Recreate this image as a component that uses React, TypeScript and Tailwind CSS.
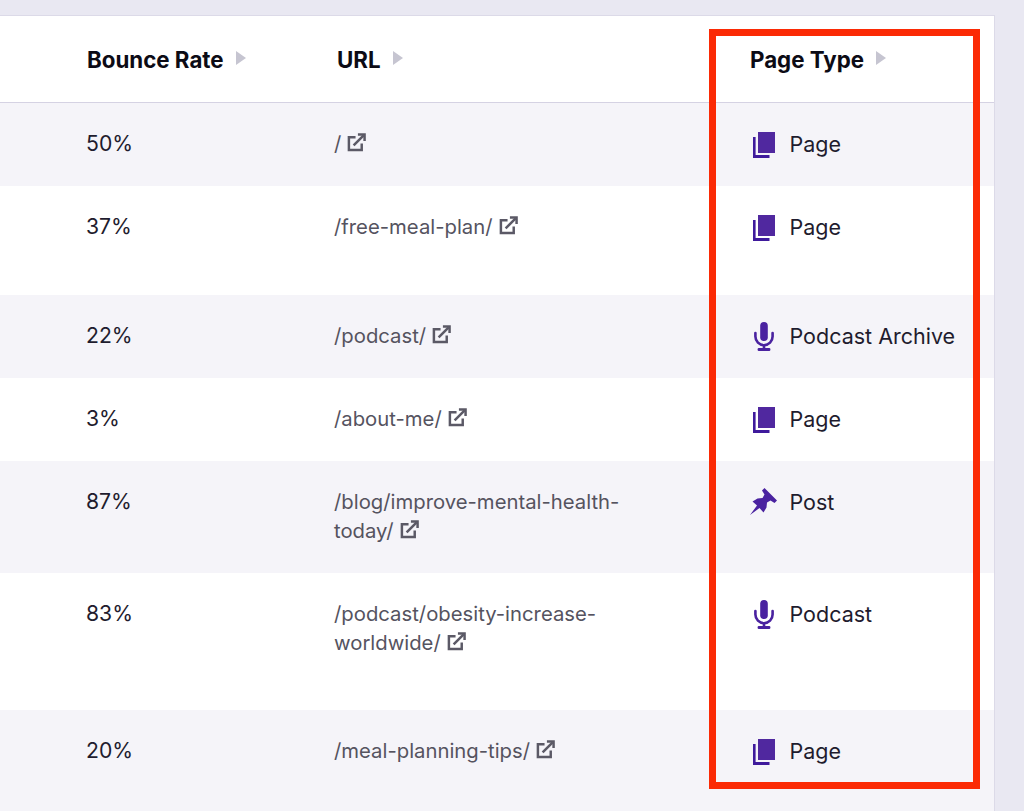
import React from 'react';

function SortArrow() {
  return (
    <svg width="10" height="14" viewBox="0 0 10 14" className="ml-[12px] mb-[2px] shrink-0">
      <polygon points="0,0 10,7 0,14" fill="#c6c5d1" />
    </svg>
  );
}

function ExternalIcon() {
  return (
    <svg width="19" height="19" viewBox="0 0 20 20" fill="none" stroke="#5b5966" strokeWidth="2.6" className="inline-block align-[-1px] ml-[6px]">
      <path d="M9 4.5H2v13.5h13.5V11" />
      <path d="M7 13 L17.5 2.5" />
      <path d="M11.5 1.5H18.5V8.5" />
    </svg>
  );
}

function PagesIcon() {
  return (
    <svg width="22" height="26" viewBox="0 0 22 26" className="mt-[3px] shrink-0">
      <path d="M0 5h2.6v18H16.5v3H0z" fill="#3f1a9c" />
      <rect x="5" y="0" width="17" height="21" fill="#50289f" />
    </svg>
  );
}

function MicIcon() {
  return (
    <svg width="20" height="29" viewBox="0 0 20 29" className="mt-[1px] shrink-0">
      <rect x="6.2" y="0" width="7.6" height="19" rx="3.8" fill="#4a22a0" />
      <path d="M1.4 11v3.6a8.6 8.6 0 0 0 17.2 0V11" fill="none" stroke="#4a22a0" strokeWidth="2.6" strokeLinecap="round" />
      <rect x="8.7" y="22" width="2.6" height="5" fill="#4a22a0" />
      <rect x="3.6" y="26" width="12.8" height="3" rx="1.2" fill="#4a22a0" />
    </svg>
  );
}

function PinIcon() {
  return (
    <svg width="27" height="27" viewBox="0 0 27 27" className="-ml-[2px] mt-[1px] shrink-0">
      <polygon
        points="0,27 7,17.5 2.5,13.5 7.5,10.5 12.5,10 14.5,6.5 12,2.5 14.5,0 27,12.5 24.5,15 20.5,12.5 17,14.5 16.5,19.5 13.5,24.5 9.5,20"
        fill="#4a22a0"
      />
    </svg>
  );
}

const rows = [
  { h: 'h-[83px]', tint: true, rate: '50%', url: '/', type: 'Page', icon: <PagesIcon /> },
  { h: 'h-[109px]', tint: false, rate: '37%', url: '/free-meal-plan/', type: 'Page', icon: <PagesIcon /> },
  { h: 'h-[83px]', tint: true, rate: '22%', url: '/podcast/', type: 'Podcast Archive', icon: <MicIcon /> },
  { h: 'h-[83px]', tint: false, rate: '3%', url: '/about-me/', type: 'Page', icon: <PagesIcon /> },
  { h: 'h-[112px]', tint: true, rate: '87%', url: '/blog/improve-mental-health-today/', type: 'Post', icon: <PinIcon /> },
  { h: 'h-[137px]', tint: false, rate: '83%', url: '/podcast/obesity-increase-worldwide/', type: 'Podcast', icon: <MicIcon /> },
  { h: 'h-[101px]', tint: true, rate: '20%', url: '/meal-planning-tips/', type: 'Page', icon: <PagesIcon /> },
];

export default function App() {
  return (
    <div className="relative h-[811px] w-[1024px] overflow-hidden bg-[#e9e8f2] pt-[15px] pr-[29px] font-['Inter',sans-serif] leading-[29px] text-[#1f1c2e]">
      <div className="h-full border-t border-r border-[#dcdae8] bg-white">
        {/* header */}
        <div className="flex h-[87px] items-center border-b border-[#d5d2e3] text-[22.3px] font-bold text-[#0c0b15]">
          <div className="flex w-[337px] items-center pl-[87px]">
            Bounce Rate
            <SortArrow />
          </div>
          <div className="flex w-[413px] items-center">
            URL
            <SortArrow />
          </div>
          <div className="flex items-center">
            Page Type
            <SortArrow />
          </div>
        </div>

        {rows.map(r => (
          <div key={r.url} className={`flex pt-[26px] ${r.h} ${r.tint ? 'bg-[#f5f4f9]' : 'bg-white'}`}>
            <div className="w-[334px] shrink-0 pl-[86px] text-[21.2px]">{r.rate}</div>
            <div className="w-[300px] shrink-0 text-[20.3px] text-[#55535f]">
              {r.url}
              <ExternalIcon />
            </div>
            <div className="ml-[118px] flex w-[240px] items-start gap-[13.5px] whitespace-nowrap text-[21.5px]">
              <div className="flex w-[24px] justify-center">{r.icon}</div>
              <span className="pt-[1px]">{r.type}</span>
            </div>
          </div>
        ))}
      </div>

      {/* highlight box */}
      <div className="absolute left-[709px] top-[29px] h-[760px] w-[271px] border-[7px] border-[#fb2a05]" />
    </div>
  );
}
